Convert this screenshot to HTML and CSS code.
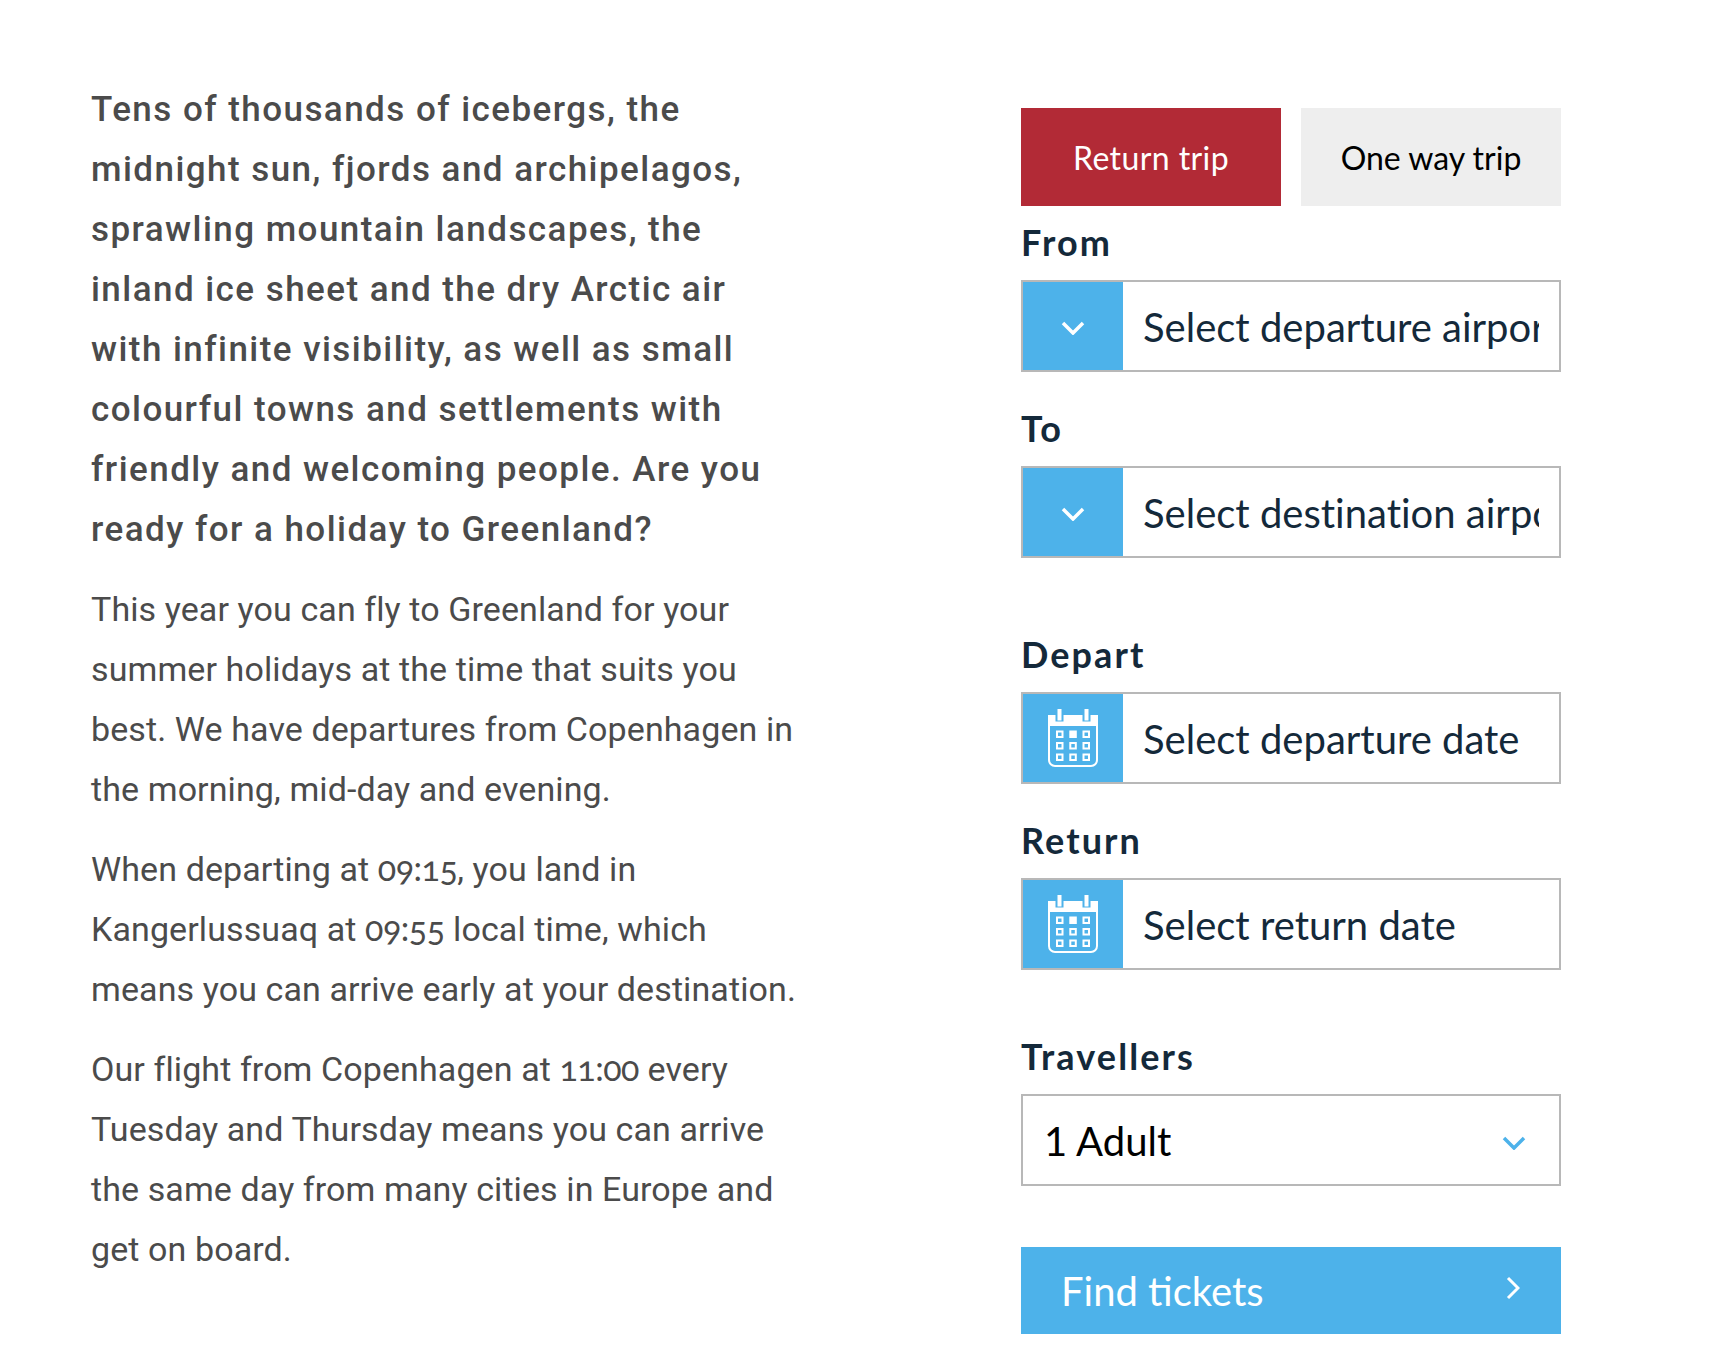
FILE: index.html
```html
<!DOCTYPE html>
<html lang="en">
<head>
<meta charset="utf-8">
<title>Flights to Greenland</title>
<link rel="stylesheet" href="styles.css">
</head>
<body>
<svg class="defs" width="0" height="0" aria-hidden="true">
  <symbol id="cal" viewBox="0 0 50 58">
    <path fill="#fff" d="M0 6h50v11H0z"/>
    <path fill="#4db2ea" d="M7.500 6h8v6.500h-8zM34.500 6h8v6.500h-8z"/>
    <path fill="#fff" d="M9.500 0h4v11.500h-4zM36.500 0h4v11.500h-4z"/>
    <path fill="none" stroke="#fff" stroke-width="2" d="M1 16v35a6 6 0 0 0 6 6h36a6 6 0 0 0 6-6V16"/>
    <g fill="none" stroke="#fff" stroke-width="2">
      <rect x="9" y="22.500" width="5.500" height="5.500"/>
      <rect x="35.500" y="22.500" width="5.500" height="5.500"/>
      <rect x="9" y="34" width="5.500" height="5.500"/>
      <rect x="22.300" y="34" width="5.500" height="5.500"/>
      <rect x="35.500" y="34" width="5.500" height="5.500"/>
      <rect x="9" y="45.500" width="5.500" height="5.500"/>
      <rect x="22.300" y="45.500" width="5.500" height="5.500"/>
      <rect x="35.500" y="45.500" width="5.500" height="5.500"/>
    </g>
    <rect x="21.300" y="21.500" width="7.500" height="7.500" fill="#fff"/>
  </symbol>
</svg>
<main class="page">
  <article class="copy">
    <p class="lead">Tens of thousands of icebergs, the<br>midnight sun, fjords and archipelagos,<br>sprawling mountain landscapes, the<br>inland ice sheet and the dry Arctic air<br>with infinite visibility, as well as small<br>colourful towns and settlements with<br>friendly and welcoming people. Are you<br>ready for a holiday to Greenland?</p>
    <p>This year you can fly to Greenland for your<br>summer holidays at the time that suits you<br>best. We have departures from Copenhagen in<br>the morning, mid-day and evening.</p>
    <p>When departing at <span class="num">09:15</span>, you land in<br>Kangerlussuaq at <span class="num">09:55</span> local time, which<br>means you can arrive early at your destination.</p>
    <p>Our flight from Copenhagen at <span class="num">11:00</span> every<br>Tuesday and Thursday means you can arrive<br>the same day from many cities in Europe and<br>get on board.</p>
  </article>
  <form class="booking">
    <div class="trip-toggle">
      <button type="button" class="trip trip-on">Return trip</button>
      <button type="button" class="trip">One way trip</button>
    </div>
    <div class="field field-first">
      <div class="label">From</div>
      <div class="control">
        <span class="addon"><svg class="chev" viewBox="0 0 24 14"><path d="M2 2l10 10L22 2"/></svg></span>
        <span class="value">Select departure airport</span>
      </div>
    </div>
    <div class="field">
      <div class="label">To</div>
      <div class="control">
        <span class="addon"><svg class="chev" viewBox="0 0 24 14"><path d="M2 2l10 10L22 2"/></svg></span>
        <span class="value">Select destination airport</span>
      </div>
    </div>
    <div class="field field-wide">
      <div class="label">Depart</div>
      <div class="control">
        <span class="addon"><svg class="cal"><use href="#cal"/></svg></span>
        <span class="value">Select departure date</span>
      </div>
    </div>
    <div class="field">
      <div class="label">Return</div>
      <div class="control">
        <span class="addon"><svg class="cal"><use href="#cal"/></svg></span>
        <span class="value">Select return date</span>
      </div>
    </div>
    <div class="field field-mid">
      <div class="label">Travellers</div>
      <div class="control control-select">
        <span class="select-value">1 Adult</span>
        <svg class="chev chev-blue" viewBox="0 0 24 14"><path d="M2 2l10 10L22 2"/></svg>
      </div>
    </div>
    <button type="button" class="find">
      <span>Find tickets</span>
      <svg class="chev-right" viewBox="0 0 14 24"><path d="M2 2l10 10L2 22"/></svg>
    </button>
  </form>
</main>
</body>
</html>
```
FILE: styles.css
```css
* { box-sizing: border-box; }
html, body { margin: 0; padding: 0; background: #fff; }
.defs { position: absolute; }
.page {
  display: flex;
  width: 1718px;
  height: 1366px;
  overflow: hidden;
  font-family: "Lato", sans-serif;
  font-variant-ligatures: none;
}
.copy {
  width: 1021px;
  padding: 78px 0 0 91px;
  font-family: "Roboto", sans-serif;
  font-size: 34px;
  line-height: 60px;
  color: #4b4b4b;
  white-space: nowrap;
  letter-spacing: 0.1px;
}
.copy p { margin: 0 0 20px; }
.copy .lead {
  padding-top: 2px;
  margin-bottom: 19px;
  font-size: 35px;
  font-weight: 500;
  letter-spacing: 1.45px;
}
.num {
  font-family: "Lato", sans-serif;
  font-variant-numeric: oldstyle-nums;
  line-height: 0;
  letter-spacing: -0.5px;
}
.booking { width: 540px; padding-top: 108px; }
.trip-toggle { display: flex; gap: 20px; }
.trip {
  flex: 1;
  height: 98px;
  border: 0;
  background: #eeeeee;
  color: #000;
  font-family: inherit;
  font-size: 32px;
  padding: 0;
}
.trip-on { background: #b22a36; color: #fff; letter-spacing: 0.4px; }
.field { margin-top: 37px; }
.field-first { margin-top: 17px; }
.field-wide { margin-top: 77px; }
.field-mid { margin-top: 67px; }
.label {
  height: 40px;
  line-height: 38px;
  margin-bottom: 17px;
  font-size: 36px;
  font-weight: 700;
  color: #14293a;
  letter-spacing: 2.1px;
}
.control {
  display: flex;
  align-items: stretch;
  height: 92px;
  border: 2px solid #b8b8b8;
  background: #fff;
}
.addon {
  flex: 0 0 100px;
  display: flex;
  align-items: center;
  justify-content: center;
  background: #4db2ea;
}
.value {
  flex: 1;
  min-width: 0;
  margin: 0 20px;
  overflow: hidden;
  white-space: nowrap;
  line-height: 90px;
  font-size: 40px;
  color: #14293a;
}
.chev { width: 24px; height: 14px; margin-top: 3px; }
.chev path { fill: none; stroke: #fff; stroke-width: 3.5; }
.chev-blue { margin-top: 5px; }
.chev-blue path { stroke: #4db2ea; }
.cal { width: 50px; height: 58px; }
.control-select {
  align-items: center;
  justify-content: space-between;
  padding: 0 33px 0 21px;
}
.select-value { font-size: 40px; color: #000; padding-top: 2px; }
.find {
  display: flex;
  align-items: center;
  justify-content: space-between;
  width: 100%;
  height: 87px;
  margin-top: 61px;
  padding: 0 41px 0 40px;
  border: 0;
  background: #4db2ea;
  color: #fff;
  font-family: inherit;
  font-size: 40px;
}
.chev-right { width: 14px; height: 24px; margin-top: -6px; }
.chev-right path { fill: none; stroke: #fff; stroke-width: 3; }
```
